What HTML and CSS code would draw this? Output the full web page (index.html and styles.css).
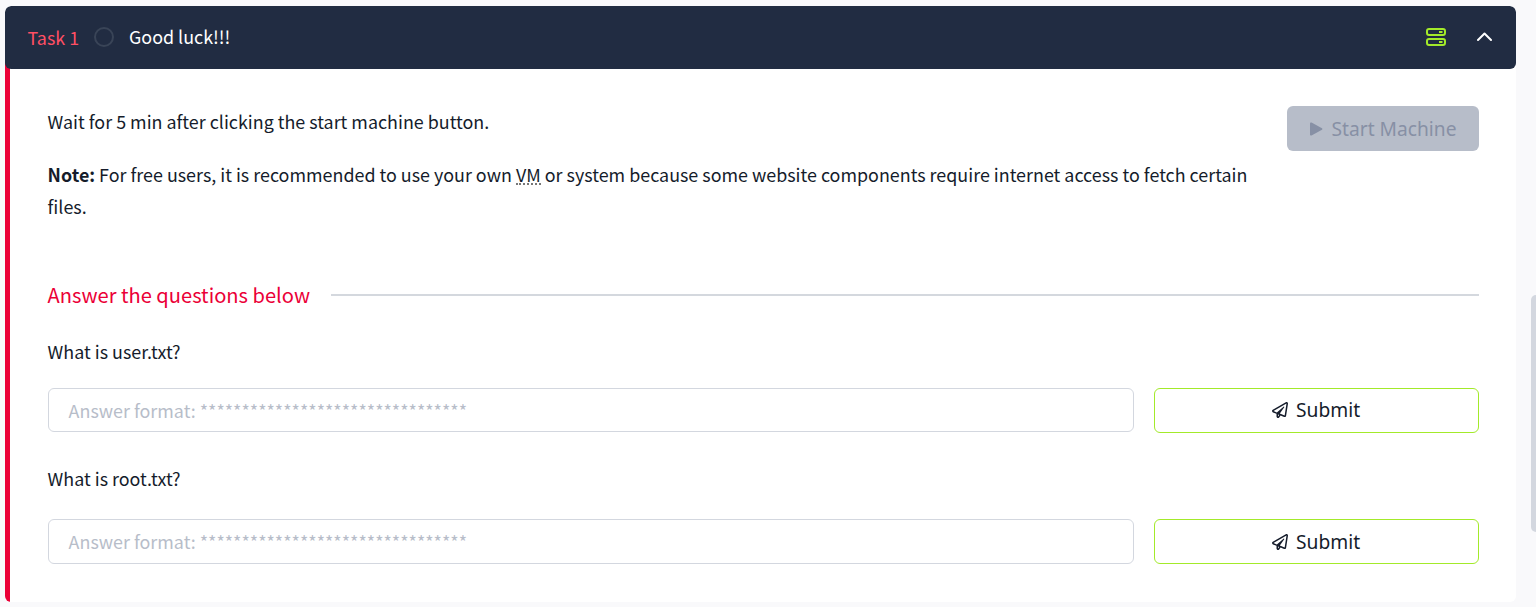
FILE: index.html
```html
<!DOCTYPE html>
<html lang="en">
<head>
<meta charset="utf-8">
<title>Task 1</title>
<link rel="stylesheet" href="styles.css">
</head>
<body>
<main class="task">
  <header class="task-header">
    <span class="task-number">Task 1</span>
    <span class="task-status"></span>
    <span class="task-title">Good luck!!!</span>
    <svg class="server-icon" width="22" height="20" viewBox="0 0 22 20" fill="none" stroke="#a3ea2a" stroke-width="2">
      <rect x="2" y="2" width="18" height="6" rx="2"/>
      <rect x="2" y="12" width="18" height="6" rx="2"/>
      <path d="M14 5h3.500M14 15h3.500"/>
    </svg>
    <svg class="chevron" width="16" height="10" viewBox="0 0 16 10" fill="none" stroke="#fff" stroke-width="2" stroke-linecap="round" stroke-linejoin="round"><path d="M2 8 8.500 1.500 15 8"/></svg>
  </header>
  <div class="task-body">
    <section class="intro">
      <div class="description">
        <p class="wait">Wait for 5 min after clicking the start machine button.</p>
        <p class="note"><strong>Note:</strong> For free users, it is recommended to use your own <abbr class="term">VM</abbr> or system because some website components require internet access to fetch certain files.</p>
      </div>
      <button class="start" disabled><svg width="13" height="14" viewBox="0 0 13 14" fill="#8790a5"><path d="M0 1.500Q0 0 1.500.6L12 6.200Q13 7 12 7.800L1.500 13.400Q0 14 0 12.500z"/></svg><span class="start-label">Start Machine</span></button>
    </section>
    <h2 class="questions-heading"><span class="heading-text">Answer the questions below</span></h2>
    <section class="question">
      <p class="question-text">What is user.txt?</p>
      <div class="answer-row first">
        <div class="answer"><span class="format">Answer format:</span><span class="stars">********************************</span></div>
        <button class="submit"><svg width="16" height="16" viewBox="0 0 512 512" fill="#151c2b"><path d="M440 6.500 24 246.400c-34.400 19.900-31.100 70.800 5.700 85.900L144 379.600V464c0 46.400 59.200 65.500 86.600 28.600l43.800-59.100 111.900 46.200c5.900 2.400 12.100 3.600 18.300 3.600 8.200 0 16.300-2.100 23.600-6.200 12.800-7.200 21.600-20 23.900-34.500l59.400-387.200c6.100-40.100-36.900-68.800-71.500-48.900zM192 464v-64.600l36.600 15.100L192 464zm212.600-28.700-153.800-63.500L391 169.500c10.700-15.500-9.500-33.500-23.700-21.200L155.800 332.600 48 288 464 48l-59.400 387.300z"/></svg><span class="submit-label">Submit</span></button>
      </div>
    </section>
    <section class="question">
      <p class="question-text">What is root.txt?</p>
      <div class="answer-row second">
        <div class="answer"><span class="format">Answer format:</span><span class="stars">********************************</span></div>
        <button class="submit"><svg width="16" height="16" viewBox="0 0 512 512" fill="#151c2b"><path d="M440 6.500 24 246.400c-34.400 19.900-31.100 70.800 5.700 85.900L144 379.600V464c0 46.400 59.200 65.500 86.600 28.600l43.800-59.100 111.900 46.200c5.900 2.400 12.100 3.600 18.300 3.600 8.200 0 16.300-2.100 23.600-6.200 12.800-7.200 21.600-20 23.900-34.500l59.400-387.200c6.100-40.100-36.900-68.800-71.500-48.900zM192 464v-64.600l36.600 15.100L192 464zm212.600-28.700-153.800-63.500L391 169.500c10.700-15.500-9.500-33.500-23.700-21.200L155.800 332.600 48 288 464 48l-59.400 387.300z"/></svg><span class="submit-label">Submit</span></button>
      </div>
    </section>
  </div>
</main>
<div class="scroll-thumb"></div>
</body>
</html>
```
FILE: styles.css
```css
* { box-sizing: border-box; }
body {
  margin: 0;
  height: 607px;
  overflow: hidden;
  background: #f9f9fb;
  color: #151c2b;
  font-family: "Noto Sans CJK SC", "Open Sans", sans-serif;
  font-size: 17.9px;
  line-height: 32px;
}
p, h2 { margin: 0; }
.task {
  width: 1511px;
  height: 596px;
  margin: 6px 0 0 5px;
  background: #fff;
  border-radius: 6px;
  overflow: hidden;
}
.task-header {
  position: relative;
  z-index: 1;
  display: flex;
  align-items: center;
  height: 63px;
  padding: 0 24px 2px 22.6px;
  background: #212c42;
  border-radius: 6px;
}
.task-number { width: 66.4px; color: #ff4f64; }
.task-status {
  width: 20px;
  height: 20px;
  border: 2px solid #394457;
  border-radius: 50%;
}
.task-title { margin-left: 15px; padding-bottom: 2px; color: #fff; }
.server-icon { margin-left: auto; }
.chevron { margin-left: 29px; }
.task-body {
  height: 539px;
  margin-top: -6px;
  border-left: 5px solid #eb0037;
  padding: 42px 37px 0 37.6px;
}
.intro { display: flex; justify-content: space-between; height: 174px; }
.description { width: 1212px; }
.note { margin-top: 21px; }
.term { display: inline-block; height: 27px; line-height: 32px; border-bottom: 2px dotted #777; }
button { font-family: "Noto Sans", "Open Sans", sans-serif; display: flex; align-items: center; justify-content: center; padding: 0; border-radius: 6px; }
.start {
  width: 192px;
  height: 45px;
  margin-top: 1px;
  gap: 9px;
  border: 0;
  background: #b7bdc9;
  color: #8790a5;
  font-size: 19.2px;
}
.questions-heading {
  display: flex;
  align-items: center;
  gap: 21px;
  height: 32px;
  color: #eb0037;
  font-size: 20.1px;
  font-weight: 400;
}
.questions-heading::after { content: ""; flex: 1; height: 2px; background: #d4d8de; }
.question-text { margin-top: 24px; }
.answer-row { display: flex; gap: 20px; }
.first { margin-top: 21px; }
.second { margin-top: 25px; }
.question + .question .question-text { margin-top: 29px; }
.answer {
  display: flex;
  align-items: center;
  width: 1086px;
  height: 44px;
  padding-left: 20px;
  gap: 4px;
  border: 1px solid #d3d7df;
  border-radius: 6px;
  color: #b7bdc9;
}
.second .answer { height: 45px; padding-bottom: 1px; }
.submit {
  width: 325px;
  height: 45px;
  gap: 8px;
  background: #fff;
  border: 1px solid #a3ea2a;
  color: #151c2b;
  font-size: 19.2px;
}
.first .submit { padding-bottom: 2px; }
.scroll-thumb {
  position: absolute;
  left: 1531px;
  top: 295px;
  width: 10px;
  height: 237px;
  border-radius: 5px;
  background: #d3d7df;
}
```
